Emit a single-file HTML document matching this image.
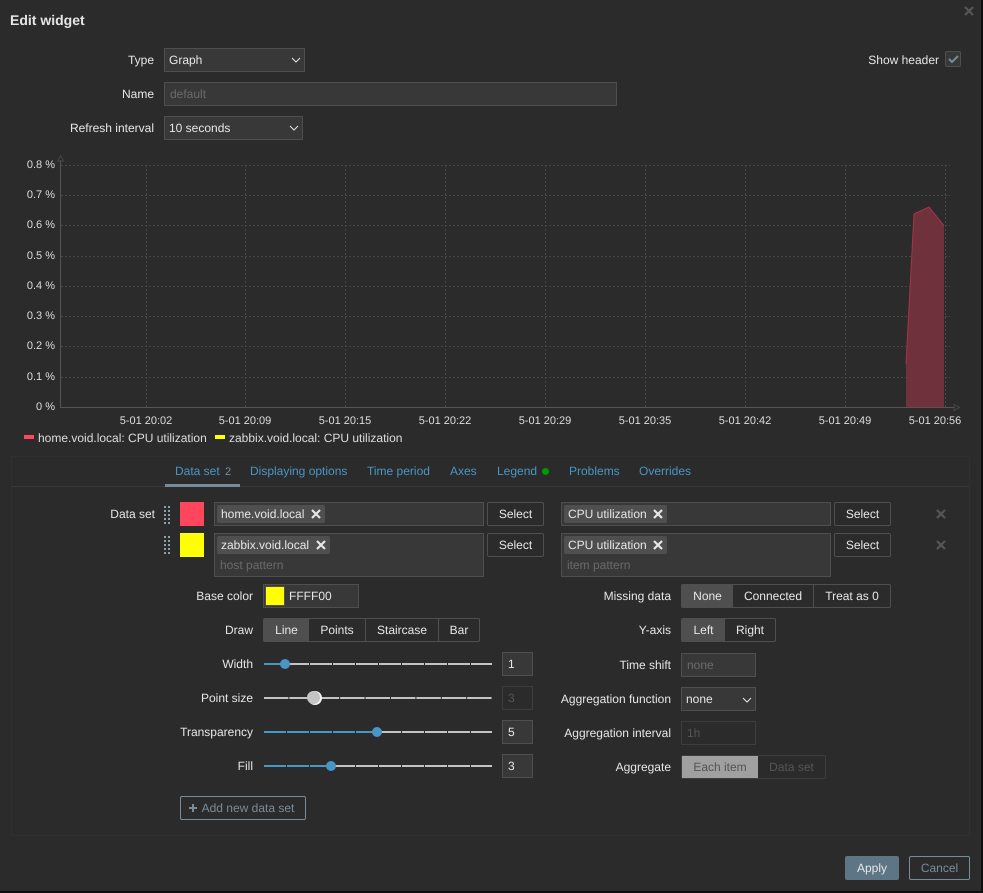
<!DOCTYPE html>
<html><head><meta charset="utf-8"><style>
*{box-sizing:border-box}
html,body{margin:0;padding:0;width:983px;height:893px;overflow:hidden;background:#0e0e0e}
body{font:12px/14px "Liberation Sans",Arial,sans-serif;color:#e6e6e6;position:relative;text-rendering:geometricPrecision}
#d{position:absolute;left:0;top:0;width:981px;height:891px;background:#2b2b2b}
.a,.l,.r,.i,.b,.t,.s,.x{position:absolute;white-space:nowrap}
.l{text-align:right;width:200px;height:14px}
.i{background:#383838;border:1px solid #4f4f4f;padding:0 5px;line-height:22px;height:24px}
.sel{padding-left:4px}
.ph{color:#6a6a6a}
.b{border:1px solid #4f4f4f;border-radius:2px;height:24px;line-height:22px;text-align:center;background:#2b2b2b}
.t{background:#4f4f4f;border-radius:2px;height:18px;line-height:18px;padding-left:4px}
.t svg{position:absolute;top:4px}
.sg{position:absolute;height:24px;border:1px solid #4f4f4f;border-radius:2px;display:flex;line-height:22px;text-align:center}
.sg div{border-right:1px solid #4f4f4f;height:22px}
.sg div:last-child{border-right:0}
.sg .on{background:#4f4f4f;border-right:0}
.tab{position:absolute;top:464px;color:#4796c4;height:14px}
.yl{position:absolute;width:55px;left:0;text-align:right;color:#dcdcdc;font-size:11px}
.xl{position:absolute;top:414px;width:80px;text-align:center;color:#dcdcdc;font-size:11px}
</style></head><body>
<div id="d"></div>
<div class="a" style="left:10px;top:12px;font:bold 14px/16px 'Liberation Sans',sans-serif;color:#e6e6e6">Edit widget</div>
<svg class="a" style="left:963px;top:5px" width="12" height="12"><path d="M2 2L10 10M10 2L2 10" stroke="#565656" stroke-width="2.2"/></svg>

<div class="l" style="left:-46px;top:53px">Type</div>
<div class="i sel" style="left:164px;top:48px;width:141px">Graph<svg class="a" style="left:126px;top:8px" width="10" height="6"><path d="M1 1L5 5L9 1" fill="none" stroke="#e6e6e6" stroke-width="1"/></svg></div>
<div class="l" style="left:-46px;top:87px">Name</div>
<div class="i ph" style="left:164px;top:82px;width:453px">default</div>
<div class="l" style="left:-46px;top:121px">Refresh interval</div>
<div class="i sel" style="left:164px;top:116px;width:139px">10 seconds<svg class="a" style="left:124px;top:8px" width="10" height="6"><path d="M1 1L5 5L9 1" fill="none" stroke="#e6e6e6" stroke-width="1"/></svg></div>
<div class="l" style="left:739px;top:53px">Show header</div>
<div class="a" style="left:945px;top:51px;width:16px;height:16px;background:#383838;border:1px solid #4f4f4f;border-radius:2px"><svg class="a" style="left:2px;top:2px" width="11" height="10"><path d="M1 5L4 8L10 2" fill="none" stroke="#768d99" stroke-width="2"/></svg></div>

<svg class="a" style="left:0;top:150px" width="983" height="265">
<g stroke="#474747" stroke-width="1" stroke-dasharray="2 2" fill="none">
<path d="M61 15.5H950M61 45.5H950M61 75.5H950M61 106.5H950M61 136.5H950M61 166.5H950M61 196.5H950M61 227.5H950"/>
<path d="M146.5 15V257M245.5 15V257M345.5 15V257M445.5 15V257M545.5 15V257M645.5 15V257M745.5 15V257M845.5 15V257M945.5 15V257"/>
</g>
<path d="M906 257V213.5L914 64L929 57L944 75.7V257Z" fill="#6f323d"/>
<path d="M906 213.5L914 64L929 57L944 75.7" fill="none" stroke="#a8324a" stroke-width="1"/>
<path d="M60.5 10V257.5H955" fill="none" stroke="#555" stroke-width="1"/>
<path d="M57.5 11L60.5 5.5L63.5 11Z" fill="none" stroke="#444"/>
<path d="M954 254.5L959.5 257.5L954 260.5Z" fill="none" stroke="#444"/>
</svg>
<div class="yl" style="top:158px">0.8 %</div>
<div class="yl" style="top:188px">0.7 %</div>
<div class="yl" style="top:218px">0.6 %</div>
<div class="yl" style="top:249px">0.5 %</div>
<div class="yl" style="top:279px">0.4 %</div>
<div class="yl" style="top:309px">0.3 %</div>
<div class="yl" style="top:339px">0.2 %</div>
<div class="yl" style="top:370px">0.1 %</div>
<div class="yl" style="top:400px">0 %</div>
<div class="xl" style="left:106px">5-01 20:02</div>
<div class="xl" style="left:205px">5-01 20:09</div>
<div class="xl" style="left:305px">5-01 20:15</div>
<div class="xl" style="left:405px">5-01 20:22</div>
<div class="xl" style="left:505px">5-01 20:29</div>
<div class="xl" style="left:605px">5-01 20:35</div>
<div class="xl" style="left:705px">5-01 20:42</div>
<div class="xl" style="left:805px">5-01 20:49</div>
<div class="xl" style="left:895px">5-01 20:56</div>
<div class="a" style="left:24px;top:435px;width:10px;height:4px;background:#ff465c"></div>
<div class="a" style="left:38px;top:431px;color:#dcdcdc">home.void.local: CPU utilization</div>
<div class="a" style="left:215px;top:435px;width:10px;height:4px;background:#ffff00"></div>
<div class="a" style="left:229px;top:431px;color:#dcdcdc">zabbix.void.local: CPU utilization</div>

<div class="a" style="left:11px;top:456px;width:959px;height:380px;border:1px solid #303030"></div>
<div class="a" style="left:12px;top:486px;width:957px;height:1px;background:#383838"></div>
<div class="tab" style="left:175px">Data set <span style="color:#768d99;margin-left:2px;font-size:11px">2</span></div>
<div class="a" style="left:165px;top:484px;width:75px;height:3px;background:#768d99"></div>
<div class="tab" style="left:250px">Displaying options</div>
<div class="tab" style="left:367px">Time period</div>
<div class="tab" style="left:450px">Axes</div>
<div class="tab" style="left:497px">Legend</div>
<div class="a" style="left:542px;top:468px;width:7px;height:7px;border-radius:50%;background:#009900"></div>
<div class="tab" style="left:569px">Problems</div>
<div class="tab" style="left:639px">Overrides</div>

<div class="l" style="left:-45px;top:507px">Data set</div>
<svg class="a" style="left:164px;top:505px" width="7" height="20"><path d="M1 1V19M5 1V19" stroke="#8fa0aa" stroke-width="2" stroke-dasharray="2 2"/></svg>
<svg class="a" style="left:164px;top:536px" width="7" height="20"><path d="M1 0V18M5 0V18" stroke="#8fa0aa" stroke-width="2" stroke-dasharray="2 2"/></svg>
<div class="a" style="left:180px;top:502px;width:24px;height:24px;background:#ff465c"></div>
<div class="a" style="left:180px;top:533px;width:24px;height:24px;background:#ffff00"></div>

<div class="i" style="left:214px;top:502px;width:270px"></div>
<div class="t" style="left:217px;top:505px;width:108px">home.void.local<svg style="left:94px" width="10" height="10"><path d="M1 1L9 9M9 1L1 9" stroke="#e6e6e6" stroke-width="2.2"/></svg></div>
<div class="b" style="left:487px;top:502px;width:57px">Select</div>
<div class="i" style="left:561px;top:502px;width:270px"></div>
<div class="t" style="left:564px;top:505px;width:103px">CPU utilization<svg style="left:89px" width="10" height="10"><path d="M1 1L9 9M9 1L1 9" stroke="#e6e6e6" stroke-width="2.2"/></svg></div>
<div class="b" style="left:834px;top:502px;width:57px">Select</div>
<svg class="a" style="left:935px;top:508px" width="12" height="12"><path d="M2 2L10 10M10 2L2 10" stroke="#565656" stroke-width="2.2"/></svg>

<div class="i" style="left:214px;top:533px;width:270px;height:44px"></div>
<div class="t" style="left:217px;top:536px;width:113px">zabbix.void.local<svg style="left:99px" width="10" height="10"><path d="M1 1L9 9M9 1L1 9" stroke="#e6e6e6" stroke-width="2.2"/></svg></div>
<div class="a ph" style="left:220px;top:558px">host pattern</div>
<div class="b" style="left:487px;top:533px;width:57px">Select</div>
<div class="i" style="left:561px;top:533px;width:270px;height:44px"></div>
<div class="t" style="left:564px;top:536px;width:103px">CPU utilization<svg style="left:89px" width="10" height="10"><path d="M1 1L9 9M9 1L1 9" stroke="#e6e6e6" stroke-width="2.2"/></svg></div>
<div class="a ph" style="left:567px;top:558px">item pattern</div>
<div class="b" style="left:834px;top:533px;width:57px">Select</div>
<svg class="a" style="left:935px;top:539px" width="12" height="12"><path d="M2 2L10 10M10 2L2 10" stroke="#565656" stroke-width="2.2"/></svg>

<div class="l" style="left:53px;top:589px">Base color</div>
<div class="i" style="left:263px;top:584px;width:96px;padding-left:25px">FFFF00</div>
<div class="a" style="left:265px;top:586px;width:20px;height:20px;background:#ffff00;border:1px solid #4f4f4f"></div>
<div class="l" style="left:53px;top:623px">Draw</div>
<div class="sg" style="left:263px;top:618px;width:217px"><div class="on" style="width:45px">Line</div><div style="width:57px">Points</div><div style="width:73px">Staircase</div><div style="width:40px">Bar</div></div>

<div class="l" style="left:53px;top:657px">Width</div>
<div class="l" style="left:53px;top:691px">Point size</div>
<div class="l" style="left:53px;top:725px">Transparency</div>
<div class="l" style="left:53px;top:759px">Fill</div>
<svg class="a" style="left:260px;top:650px" width="240" height="130">
<g fill="none" stroke-width="2">
<path d="M4 14H232" stroke="#c4c4c4" stroke-dasharray="22 1"/>
<path d="M4 14H25" stroke="#4796c4"/>
<path d="M4 48H232" stroke="#c4c4c4" stroke-dasharray="24.4 1"/>
<path d="M4 82H232" stroke="#c4c4c4" stroke-dasharray="22 1"/>
<path d="M4 82H117" stroke="#4796c4" stroke-dasharray="22 1"/>
<path d="M4 116H232" stroke="#c4c4c4" stroke-dasharray="22 1"/>
<path d="M4 116H71" stroke="#4796c4" stroke-dasharray="22 1"/>
</g>
<circle cx="25" cy="14" r="5" fill="#4796c4"/>
<circle cx="55" cy="48" r="7" fill="#f2f2f2"/><circle cx="53.5" cy="47.5" r="6.5" fill="#c4c4c4"/>
<circle cx="117" cy="82" r="5" fill="#4796c4"/>
<circle cx="71" cy="116" r="5" fill="#4796c4"/>
</svg>
<div class="i" style="left:502px;top:652px;width:31px">1</div>
<div class="i" style="left:502px;top:686px;width:31px;background:#2b2b2b;border-color:#3d3d3d;color:#555">3</div>
<div class="i" style="left:502px;top:720px;width:31px">5</div>
<div class="i" style="left:502px;top:754px;width:31px">3</div>
<div class="b" style="left:180px;top:796px;width:126px;border-color:#768d99;color:#768d99;padding-left:10px"><svg class="a" style="left:8px;top:7px" width="8" height="8"><path d="M4 0V8M0 4H8" stroke="#768d99" stroke-width="2"/></svg>Add new data set</div>

<div class="l" style="left:471px;top:589px">Missing data</div>
<div class="sg" style="left:681px;top:584px;width:210px"><div class="on" style="width:51px">None</div><div style="width:81px">Connected</div><div style="width:76px">Treat as 0</div></div>
<div class="l" style="left:471px;top:623px">Y-axis</div>
<div class="sg" style="left:681px;top:618px;width:95px"><div class="on" style="width:43px">Left</div><div style="width:50px">Right</div></div>
<div class="l" style="left:471px;top:658px">Time shift</div>
<div class="i ph" style="left:681px;top:653px;width:75px">none</div>
<div class="l" style="left:471px;top:692px">Aggregation function</div>
<div class="i sel" style="left:681px;top:687px;width:75px">none<svg class="a" style="left:60px;top:9px" width="10" height="6"><path d="M1 1L5 5L9 1" fill="none" stroke="#e6e6e6" stroke-width="1"/></svg></div>
<div class="l" style="left:471px;top:726px">Aggregation interval</div>
<div class="i" style="left:681px;top:721px;width:75px;background:#2b2b2b;border-color:#3d3d3d;color:#555">1h</div>
<div class="l" style="left:471px;top:760px">Aggregate</div>
<div class="sg" style="left:681px;top:755px;width:145px;border-color:#3d3d3d"><div style="width:76px;background:#a0a0a0;color:#555;border:0">Each item</div><div style="width:67px;color:#555">Data set</div></div>

<div class="b" style="left:845px;top:856px;width:54px;background:#5d7584;border-color:#5d7584">Apply</div>
<div class="b" style="left:909px;top:856px;width:61px;border-color:#768d99;color:#768d99">Cancel</div>
</body></html>
